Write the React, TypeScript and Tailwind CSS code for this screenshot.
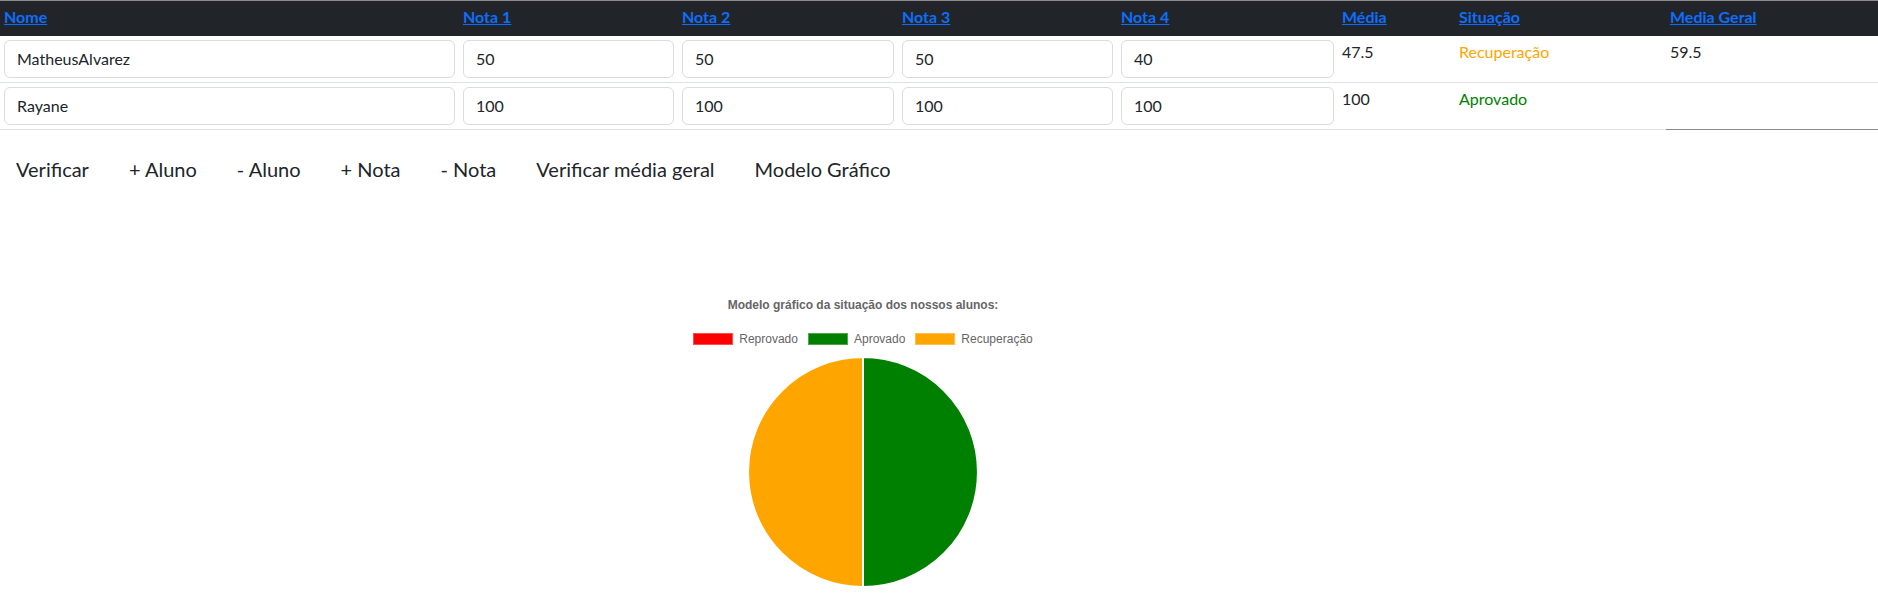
import React from "react";

const headers = ["Nome", "Nota 1", "Nota 2", "Nota 3", "Nota 4", "Média", "Situação", "Media Geral"];

function Field({ value }: { value: string }) {
  return (
    <input
      defaultValue={value}
      className="block w-full h-[38px] rounded-[6px] border border-[#d9dce0] bg-white px-3 text-[16px] text-[#212529] outline-none"
    />
  );
}

function Pie() {
  const r = 115;
  const c = 117;
  return (
    <svg width="234" height="234" viewBox="0 0 234 234">
      <path d={`M${c} ${c} L${c} ${c - r} A${r} ${r} 0 0 1 ${c} ${c + r} Z`} fill="#008000" stroke="#ffffff" strokeWidth="2" />
      <path d={`M${c} ${c} L${c} ${c + r} A${r} ${r} 0 0 1 ${c} ${c - r} Z`} fill="#ffa500" stroke="#ffffff" strokeWidth="2" />
    </svg>
  );
}

function LegendItem({ color, label }: { color: string; label: string }) {
  return (
    <div className="flex items-center gap-[6px]">
      <span className={`block w-[40px] h-[12px] border border-white/30 ${color}`} />
      <span className="text-[12px] leading-[12px] text-[#666666]">{label}</span>
    </div>
  );
}

export default function App() {
  return (
    <div className="w-[1878px] bg-white font-['Lato',sans-serif] text-[#212529]">
      <table className="w-full table-fixed border-collapse border border-l-0 border-[#8c8c8c]">
        <colgroup>
          <col className="w-[459px]" />
          <col className="w-[219px]" />
          <col className="w-[220px]" />
          <col className="w-[219px]" />
          <col className="w-[221px]" />
          <col className="w-[117px]" />
          <col className="w-[211px]" />
          <col className="w-[212px]" />
        </colgroup>
        <thead>
          <tr className="bg-[#212529]">
            {headers.map((h) => (
              <th key={h} className="h-[35px] p-1 text-left align-top text-[16px] leading-6 font-bold">
                <a href="#" className="text-[#0d6efd] underline">
                  {h}
                </a>
              </th>
            ))}
          </tr>
        </thead>
        <tbody>
          <tr>
            <td className="p-1 border-b border-[#dee2e6]"><Field value="MatheusAlvarez" /></td>
            <td className="p-1 border-b border-[#dee2e6]"><Field value="50" /></td>
            <td className="p-1 border-b border-[#dee2e6]"><Field value="50" /></td>
            <td className="p-1 border-b border-[#dee2e6]"><Field value="50" /></td>
            <td className="p-1 border-b border-[#dee2e6]"><Field value="40" /></td>
            <td className="p-1 align-top text-[16px] leading-6 border-b border-[#dee2e6]">47.5</td>
            <td className="p-1 align-top text-[16px] leading-6 text-[#ffa500] border-b border-[#dee2e6]">Recuperação</td>
            <td className="p-1 align-top text-[16px] leading-6 border-b border-[#dee2e6]">59.5</td>
          </tr>
          <tr>
            <td className="p-1 border-b border-[#dee2e6]"><Field value="Rayane" /></td>
            <td className="p-1 border-b border-[#dee2e6]"><Field value="100" /></td>
            <td className="p-1 border-b border-[#dee2e6]"><Field value="100" /></td>
            <td className="p-1 border-b border-[#dee2e6]"><Field value="100" /></td>
            <td className="p-1 border-b border-[#dee2e6]"><Field value="100" /></td>
            <td className="p-1 align-top text-[16px] leading-6 border-b border-[#dee2e6]">100</td>
            <td className="p-1 align-top text-[16px] leading-6 text-[#008000] border-b border-[#dee2e6]">Aprovado</td>
          </tr>
        </tbody>
      </table>

      <div className="mt-4 flex gap-[8px]">
        {["Verificar", "+ Aluno", "- Aluno", "+ Nota", "- Nota", "Verificar média geral", "Modelo Gráfico"].map((b) => (
          <button key={b} className="px-4 py-2 text-[20px] leading-[30px] text-[#212529] bg-transparent">
            {b}
          </button>
        ))}
      </div>

      <div className="mt-[106px] w-[1726px] flex flex-col items-center font-['Liberation_Sans',Arial,sans-serif]">
        <div className="text-[12px] leading-[14px] font-bold text-[#666666]">
          Modelo gráfico da situação dos nossos alunos:
        </div>
        <div className="mt-[21px] flex items-center gap-[10px]">
          <LegendItem color="bg-[#ff0000]" label="Reprovado" />
          <LegendItem color="bg-[#008000]" label="Aprovado" />
          <LegendItem color="bg-[#ffa500]" label="Recuperação" />
        </div>
        <div className="mt-[10px]">
          <Pie />
        </div>
      </div>
    </div>
  );
}
